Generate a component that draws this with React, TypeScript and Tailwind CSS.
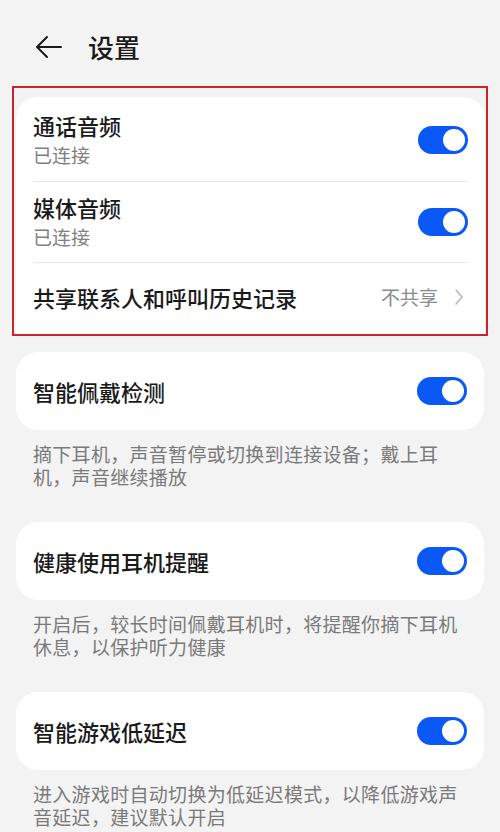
import React from "react";

function Toggle() {
  return (
    <div className="w-[50px] h-[28px] rounded-full bg-[#0a59f7] flex items-center justify-end pr-[3px] shrink-0">
      <div className="w-[22px] h-[22px] rounded-full bg-white" />
    </div>
  );
}

interface Feature {
  title: string;
  desc: string;
}

const features: Feature[] = [
  {
    title: "智能佩戴检测",
    desc: "摘下耳机，声音暂停或切换到连接设备；戴上耳机，声音继续播放",
  },
  {
    title: "健康使用耳机提醒",
    desc: "开启后，较长时间佩戴耳机时，将提醒你摘下耳机休息，以保护听力健康",
  },
  {
    title: "智能游戏低延迟",
    desc: "进入游戏时自动切换为低延迟模式，以降低游戏声音延迟，建议默认开启",
  },
];

export default function App() {
  return (
    <div
      className="w-[500px] h-[832px] overflow-hidden bg-[#f3f3f3] text-[#1a1a1a]"
      style={{ fontFamily: '"Noto Sans CJK SC", "Noto Sans", sans-serif' }}
    >
      {/* Header */}
      <div className="h-[86px] flex items-center pl-[34px] pt-[8px]">
        <svg width="30" height="30" viewBox="0 0 30 30" fill="none" stroke="#1a1a1a" strokeWidth={2} strokeLinecap="round" strokeLinejoin="round">
          <path d="M27 15H4M13 5L3 15l10 10" />
        </svg>
        <h1 className="ml-[24px] text-[26px] font-medium leading-none">设置</h1>
      </div>

      {/* Highlighted group */}
      <div className="mx-[12px] border-2 border-[#c8242c] pt-[9px] pl-[2px] pr-[1px] h-[250px] overflow-hidden">
        <div className="bg-white rounded-t-[22px] px-[17px] h-[260px]">
          <div className="flex items-center justify-between h-[85px] border-b border-[#e8e8e8] pt-[1px]">
            <div>
              <div className="text-[22px] leading-[30px] font-medium">通话音频</div>
              <div className="text-[19px] leading-[30px] text-[#808080]">已连接</div>
            </div>
            <Toggle />
          </div>
          <div className="flex items-center justify-between h-[81px] border-b border-[#e8e8e8]">
            <div>
              <div className="text-[22px] leading-[30px] font-medium">媒体音频</div>
              <div className="text-[19px] leading-[30px] text-[#808080]">已连接</div>
            </div>
            <Toggle />
          </div>
          <div className="flex items-center justify-between h-[68px]">
            <div className="text-[22px] font-medium">共享联系人和呼叫历史记录</div>
            <div className="flex items-center gap-[16px] pr-[4px] text-[19px] text-[#8a8a8a]">
              <span>不共享</span>
              <svg width="10" height="18" viewBox="0 0 10 18" fill="none" stroke="#b8b8b8" strokeWidth={1.6} strokeLinecap="round" strokeLinejoin="round">
                <path d="M2 2l6 7-6 7" />
              </svg>
            </div>
          </div>
        </div>
      </div>

      {/* Feature cards */}
      <div className="flex flex-col pt-[16px]">
        {features.map((f) => (
          <div key={f.title} className="h-[170px]">
            <div className="mx-[16px] h-[78px] bg-white rounded-[22px] flex items-center justify-between pl-[17px] pr-[17px]">
              <span className="text-[22px] font-medium">{f.title}</span>
              <Toggle />
            </div>
            <p className="pl-[33px] pr-[36px] pt-[12px] text-[19px] tracking-[0.3px] leading-[23px] text-[#7a7a7a]">
              {f.desc}
            </p>
          </div>
        ))}
      </div>
    </div>
  );
}
